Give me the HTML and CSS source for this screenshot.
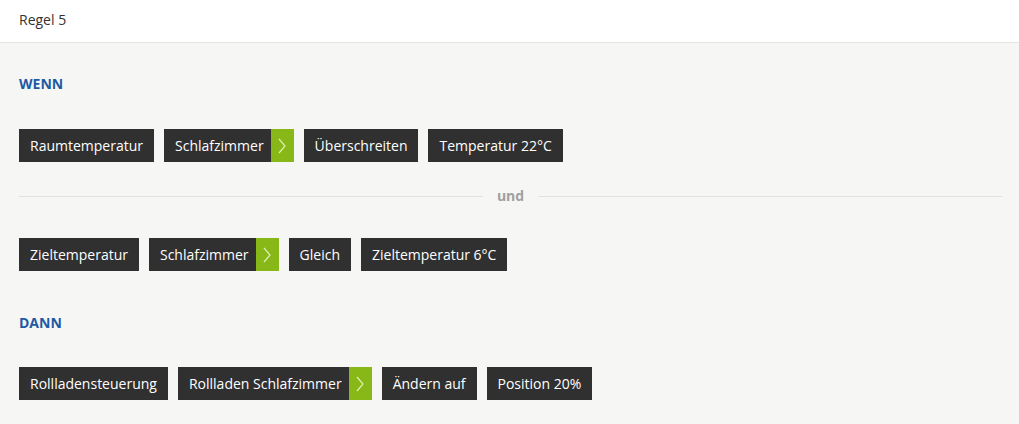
FILE: index.html
```html
<!DOCTYPE html>
<html lang="de">
<head>
<meta charset="utf-8">
<title>Regel 5</title>
<link rel="stylesheet" href="styles.css">
</head>
<body>
<header class="head">Regel 5</header>
<main class="rule">
  <h2 class="label">WENN</h2>
  <div class="row">
    <span class="chip">Raumtemperatur</span>
    <span class="chip has-arrow">Schlafzimmer<span class="arrow"><svg width="8" height="16" viewBox="0 0 8 16"><path d="M1 1 L7 8 L1 15" fill="none" stroke="#dff0b0" stroke-width="1.2"/></svg></span></span>
    <span class="chip">Überschreiten</span>
    <span class="chip">Temperatur 22°C</span>
  </div>
  <div class="sep"><span>und</span></div>
  <div class="row">
    <span class="chip">Zieltemperatur</span>
    <span class="chip has-arrow">Schlafzimmer<span class="arrow"><svg width="8" height="16" viewBox="0 0 8 16"><path d="M1 1 L7 8 L1 15" fill="none" stroke="#dff0b0" stroke-width="1.2"/></svg></span></span>
    <span class="chip">Gleich</span>
    <span class="chip">Zieltemperatur 6°C</span>
  </div>
  <h2 class="label then">DANN</h2>
  <div class="row">
    <span class="chip">Rollladensteuerung</span>
    <span class="chip has-arrow">Rollladen Schlafzimmer<span class="arrow"><svg width="8" height="16" viewBox="0 0 8 16"><path d="M1 1 L7 8 L1 15" fill="none" stroke="#dff0b0" stroke-width="1.2"/></svg></span></span>
    <span class="chip">Ändern auf</span>
    <span class="chip">Position 20%</span>
  </div>
</main>
</body>
</html>
```
FILE: styles.css
```css
html, body {
  margin: 0;
  padding: 0;
}
body {
  background: #f6f6f5;
  font-family: "Open Sans", "Noto Sans", sans-serif;
  font-size: 14px;
  color: #333;
  height: 424px;
  overflow: hidden;
}
.head {
  background: #fff;
  height: 43px;
  border-bottom: 1px solid #e4e4e4;
  box-sizing: border-box;
  padding: 10px 19px 0;
  font-size: 14px;
  color: #333;
  line-height: 20px;
}
.rule {
  padding: 31px 17px 0 19px;
}
.label {
  margin: 0;
  font-size: 14px;
  font-weight: 700;
  color: #1d5aa3;
  line-height: 20px;
}
.label.then {
  margin-top: 42px;
}
.row {
  display: flex;
  gap: 10px;
  margin-top: 35px;
}
.label.then + .row {
  margin-top: 34px;
}
.chip {
  display: flex;
  align-items: center;
  background: #303030;
  color: #fff;
  height: 33px;
  padding: 0 11px;
  font-size: 14px;
  line-height: 33px;
  box-sizing: border-box;
}
.chip.has-arrow {
  padding-right: 0;
}
.arrow {
  display: flex;
  align-items: center;
  justify-content: center;
  width: 23px;
  height: 33px;
  margin-left: 7px;
  background: #87b817;
}
.sep {
  display: flex;
  align-items: center;
  gap: 14px;
  margin: 24px 0 0;
  color: #a0a0a0;
  font-weight: 700;
  font-size: 14px;
  line-height: 20px;
}
.sep::before, .sep::after {
  content: "";
  flex: 1;
  height: 1px;
  background: #e2e2e0;
}
.sep + .row {
  margin-top: 32px;
}
```
